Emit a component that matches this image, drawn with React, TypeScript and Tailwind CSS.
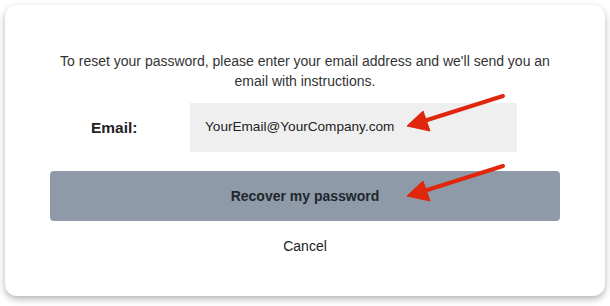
export default function App() {
  return (
    <div className="relative w-[610px] h-[306px] bg-white font-['Liberation_Sans',Arial,sans-serif] text-[#333]">
      <div className="absolute left-[5px] top-[5px] w-[600px] h-[291px] rounded-[12px] bg-white shadow-[0_3px_7px_rgba(0,0,0,0.3)]">
        <div className="flex flex-col items-center pt-[46px]">
          <p className="text-[14px] leading-[20px] text-center">
            To reset your password, please enter your email address and we'll send you an
            <br />
            email with instructions.
          </p>

          <div className="mt-[12px] flex w-[510px] items-center">
            <label className="w-[140px] pl-[41px] text-[15.5px] font-bold text-[#222]">Email:</label>
            <div className="flex h-[49px] w-[327px] items-center bg-[#efefef] pl-[15px] text-[13.6px] text-[#222]">
              YourEmail@YourCompany.com
            </div>
          </div>

          <button className="mt-[19px] h-[50px] w-[510px] rounded-[4px] bg-[#8e9aa8] text-[14px] font-bold text-[#1f262d]">
            Recover my password
          </button>

          <button className="mt-[15px] text-[14px] leading-[20px] text-[#222]">Cancel</button>
        </div>
      </div>

      {/* annotation arrows */}
      <svg className="pointer-events-none absolute left-0 top-0" width="610" height="306" viewBox="0 0 610 306">
        <g fill="#e0260c" stroke="#e0260c">
          <line x1="503" y1="96" x2="424" y2="121" strokeWidth="4" strokeLinecap="round" />
          <polygon points="407,126 423,111 430,131" strokeWidth="1" strokeLinejoin="round" />
          <line x1="503" y1="166" x2="424" y2="191" strokeWidth="4" strokeLinecap="round" />
          <polygon points="407,196 423,181 430,201" strokeWidth="1" strokeLinejoin="round" />
        </g>
      </svg>
    </div>
  )
}
